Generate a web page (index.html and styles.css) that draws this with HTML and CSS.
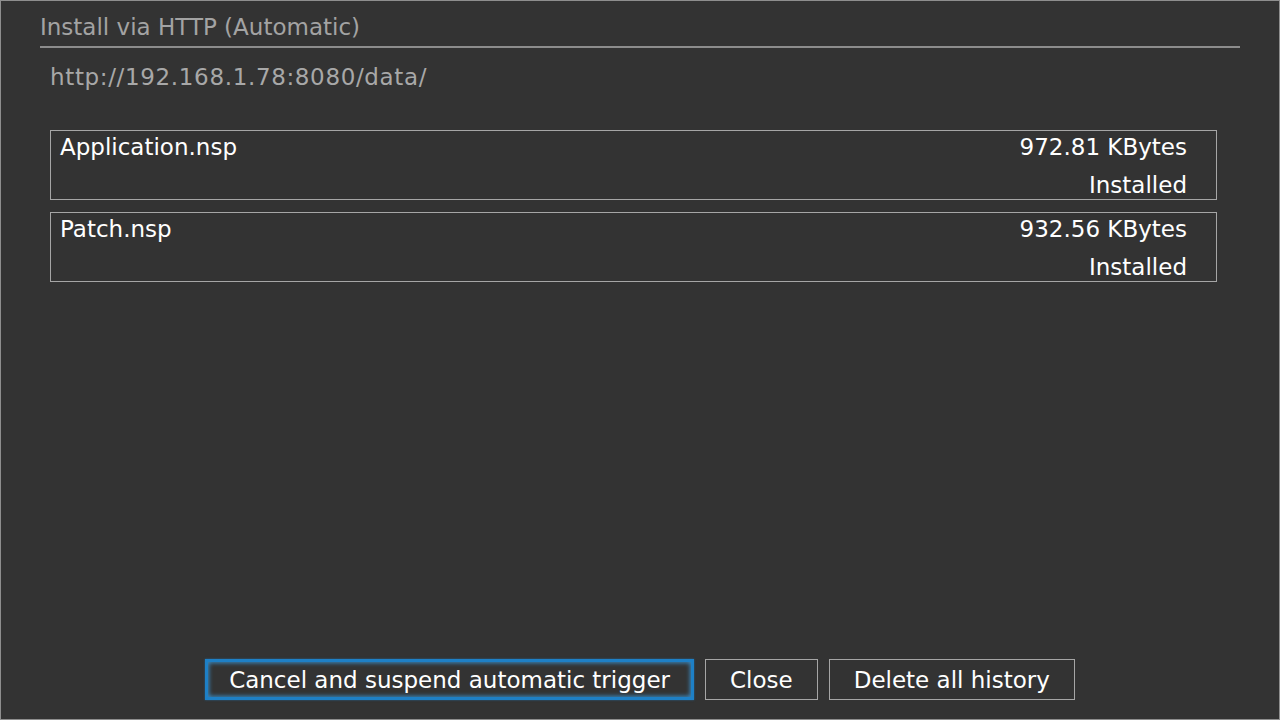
FILE: index.html
```html
<!DOCTYPE html>
<html>
<head>
<meta charset="utf-8">
<link rel="stylesheet" href="styles.css">
</head>
<body>
<div class="screen">
  <div class="header">
    <div class="title">Install via HTTP (Automatic)</div>
  </div>
  <div class="url">http://192.168.1.78:8080/data/</div>
  <div class="list">
    <div class="item">
      <div class="row"><span class="name">Application.nsp</span><span class="size">972.81 KBytes</span></div>
      <div class="row end"><span class="status">Installed</span></div>
    </div>
    <div class="item">
      <div class="row"><span class="name">Patch.nsp</span><span class="size">932.56 KBytes</span></div>
      <div class="row end"><span class="status">Installed</span></div>
    </div>
  </div>
  <div class="spacer"></div>
  <div class="buttons">
    <div class="btn focused">Cancel and suspend automatic trigger</div>
    <div class="btn">Close</div>
    <div class="btn">Delete all history</div>
  </div>
</div>
</body>
</html>
```
FILE: styles.css
```css
html, body {
  margin: 0;
  padding: 0;
  background: #333333;
}
.screen {
  width: 1280px;
  height: 720px;
  box-sizing: border-box;
  border: 1px solid #8e8e8e;
  background: #333333;
  display: flex;
  flex-direction: column;
  font-family: "DejaVu Sans", sans-serif;
  font-size: 23px;
  color: #ffffff;
}
.header {
  margin: 0 39px 0 39px;
  border-bottom: 2px solid #8c8c8c;
  padding: 12px 0 5px 0;
}
.title {
  line-height: 28px;
  color: #a3a3a3;
}
.url {
  margin: 14px 0 0 49px;
  line-height: 30px;
  color: #a8a8a8;
  letter-spacing: 0.65px;
}
.list {
  margin: 38px 62px 0 49px;
  display: flex;
  flex-direction: column;
  gap: 12px;
}
.item {
  height: 70px;
  box-sizing: border-box;
  border: 1px solid #a6a6a6;
  padding: 0 29px 0 9px;
  display: flex;
  flex-direction: column;
}
.row {
  display: flex;
  justify-content: space-between;
  line-height: 32px;
  height: 32px;
}
.row.end {
  justify-content: flex-end;
  margin-top: 6px;
}
.spacer {
  flex: 1;
}
.buttons {
  display: flex;
  justify-content: center;
  gap: 11px;
  margin-bottom: 19px;
}
.btn {
  height: 41px;
  box-sizing: border-box;
  border: 1px solid #a6a6a6;
  padding: 2px 24px 0 24px;
  line-height: 37px;
  white-space: nowrap;
}
.btn.focused {
  border: 3px solid #1e80c6;
  box-shadow: inset 0 0 4px 1px rgba(60, 160, 230, 0.8), 0 0 2px 0 rgba(30, 128, 198, 0.6);
  padding: 0 21px;
  line-height: 37px;
}
```
